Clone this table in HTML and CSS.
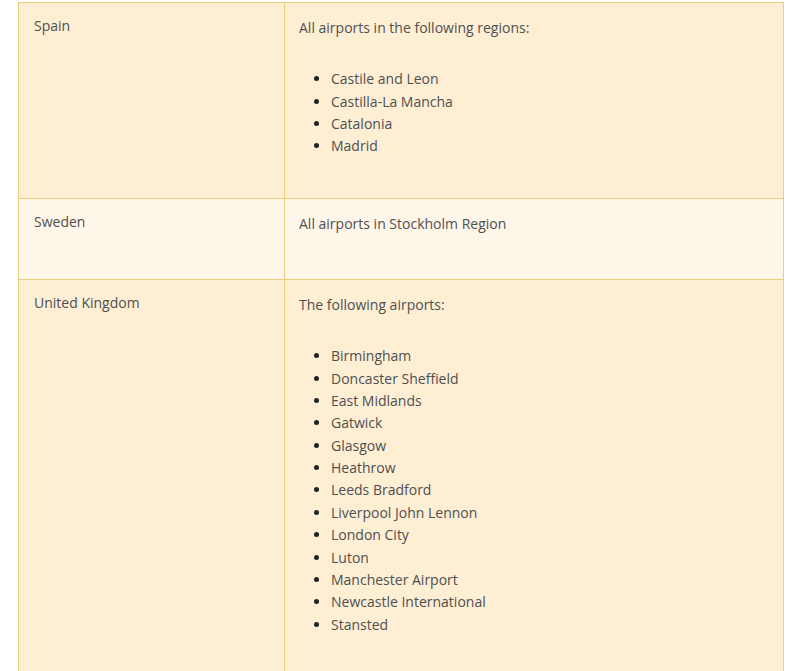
FILE: index.html
```html
<!DOCTYPE html>
<html lang="en">
<head>
<meta charset="utf-8">
<title>Airports</title>
<link rel="stylesheet" href="styles.css">
</head>
<body>
<table class="regions">
  <tr class="row">
    <td class="country">Spain</td>
    <td class="detail">
      <p class="intro">All airports in the following regions:</p>
      <ul class="list">
        <li>Castile and Leon</li>
        <li>Castilla-La Mancha</li>
        <li>Catalonia</li>
        <li>Madrid</li>
      </ul>
    </td>
  </tr>
  <tr class="row alt">
    <td class="country">Sweden</td>
    <td class="detail">
      <p class="intro">All airports in Stockholm Region</p>
    </td>
  </tr>
  <tr class="row">
    <td class="country">United Kingdom</td>
    <td class="detail">
      <p class="intro">The following airports:</p>
      <ul class="list">
        <li>Birmingham</li>
        <li>Doncaster Sheffield</li>
        <li>East Midlands</li>
        <li>Gatwick</li>
        <li>Glasgow</li>
        <li>Heathrow</li>
        <li>Leeds Bradford</li>
        <li>Liverpool John Lennon</li>
        <li>London City</li>
        <li>Luton</li>
        <li>Manchester Airport</li>
        <li>Newcastle International</li>
        <li>Stansted</li>
      </ul>
    </td>
  </tr>
</table>
</body>
</html>
```

FILE: styles.css
```css
html, body {
  margin: 0;
  padding: 0;
  background: #ffffff;
}
body {
  padding: 2px 0 0 18px;
  font-family: "Open Sans", "Liberation Sans", sans-serif;
  font-size: 14px;
  line-height: 22.35px;
  color: #505050;
}
.regions {
  border-collapse: collapse;
  width: 766px;
  table-layout: fixed;
}
.row {
  background: #fdeed4;
}
.row.alt {
  background: #fef6e9;
}
.regions td {
  border: 1px solid #e9d07e;
  vertical-align: top;
  padding: 12px 15px 15px;
}
.regions td.detail {
  padding-left: 14px;
}
.country {
  width: 235px;
}
.intro {
  margin: 2px 0 29px;
}
.list {
  margin: 0 0 25px;
  padding-left: 32px;
  list-style: disc;
}
.list li::marker {
  color: #222222;
}
```
